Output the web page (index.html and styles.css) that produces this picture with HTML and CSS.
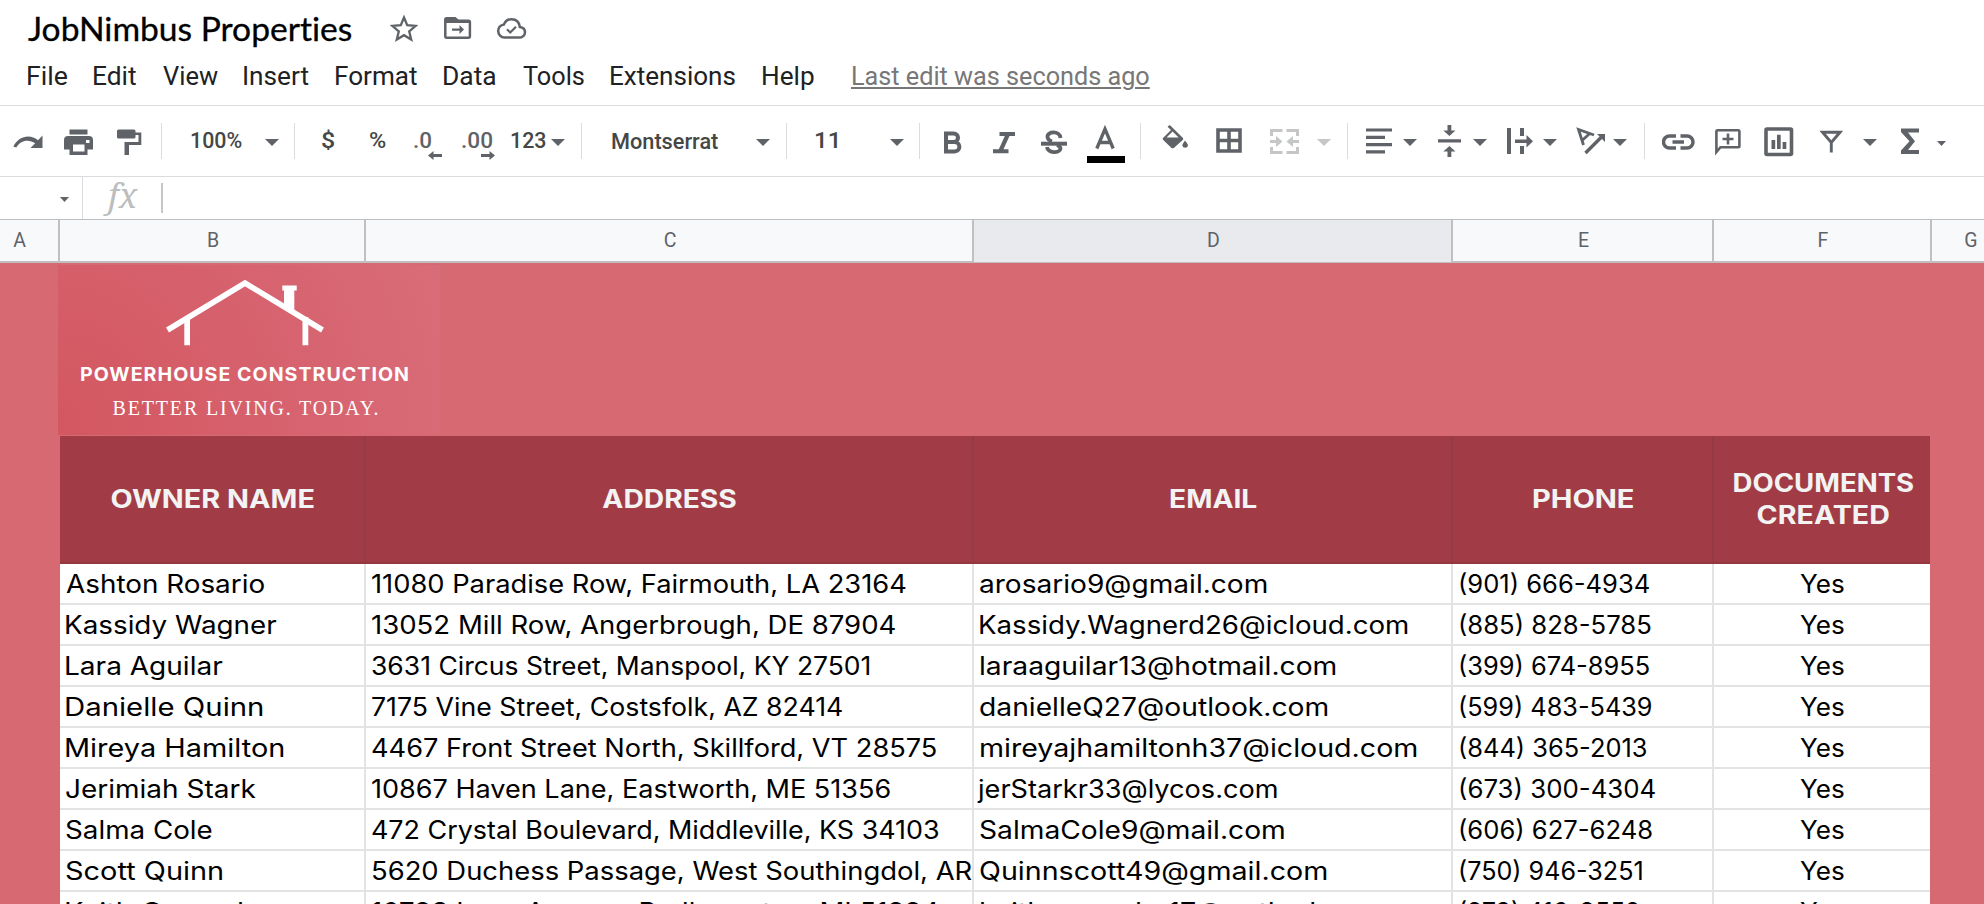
FILE: index.html
```html
<!DOCTYPE html>
<html lang="en">
<head>
<meta charset="utf-8">
<title>JobNimbus Properties</title>
<link rel="stylesheet" href="styles.css">
</head>
<body>
<header class="titlebar">
  <h1 class="title"><span class="fit" data-w="324">JobNimbus Properties</span></h1>
  <svg class="title-icons" width="150" height="50" viewBox="385 0 150 50">
    <path d="M404 17.500 L407.200 25.200 L415.600 25.900 L409.200 31.400 L411.200 39.500 L404 35.200 L396.800 39.500 L398.800 31.400 L392.400 25.900 L400.800 25.200 Z" class="line" stroke-width="2.300"/>
    <path d="M445.300 20.200 V36.300 Q445.300 37.700 446.700 37.700 H468.500 Q469.900 37.700 469.900 36.300 V22 Q469.900 20.700 468.500 20.700 H458 L455 18.300 H446.700 Q445.300 18.300 445.300 20.200 Z" class="line" stroke-width="2.500"/>
    <path d="M444.500 18 H455 L458.500 20 H470 V23 H444.500 Z" class="solid"/>
    <path d="M452 28.400 H459.500 V25 L464 29.500 L459.500 34 V30.700 H452 Z" class="solid"/>
    <path d="M504.500 37.600 H518.500 C523.200 37.600 525 34.500 525 32.200 C525 29 522.500 27.200 519.800 26.900 C519.200 21.500 515.500 19.200 511.500 19.200 C507.800 19.200 505.200 21.300 504 24.400 C500.500 24.900 498.200 27.600 498.200 31 C498.200 34.500 501 37.600 504.500 37.600 Z" class="line" stroke-width="2.500"/>
    <path d="M507 29.300 L510.200 32.500 L516 26.700" class="line" stroke-width="2.200"/>
  </svg>
</header>

<nav class="menubar">
  <a class="fit" data-w="39">File</a>
  <a class="fit" data-w="42">Edit</a>
  <a class="fit" data-w="54.500">View</a>
  <a class="fit" data-w="64.500">Insert</a>
  <a class="fit" data-w="81">Format</a>
  <a class="fit" data-w="51.500">Data</a>
  <a class="fit" data-w="61.500">Tools</a>
  <a class="fit" data-w="124.500">Extensions</a>
  <a class="fit" data-w="51">Help</a>
  <a class="fit last-edit" data-w="296">Last edit was seconds ago</a>
</nav>

<div class="toolbar">
  <svg width="31" height="70" viewBox="13 106 31 70"><path d="M42.500 135.500 V148 H30.500 L35.200 143.300 C28.500 138.500 20 140.500 16.300 147.600 L13.300 146.500 C18.500 136 30 133.500 38 140.200 Z" class="solid"/></svg>
  <svg width="31" height="70" viewBox="64 106 31 70"><path d="M69.500 129.500 H87.500 V134.500 H69.500 Z M68 136 H89 Q93 136 93 140 V149.500 H87.500 V155 H69.500 V149.500 H64 V140 Q64 136 68 136 Z M73 144.500 V151.500 H84.500 V144.500 Z M86 140 V143 H89.500 V140 Z" class="solid" fill-rule="evenodd"/></svg>
  <svg width="27" height="70" viewBox="117 106 27 70"><path d="M118.500 129.500 H134 Q135.500 129.500 135.500 131 V132.500 H141.300 V145 H129 V155 H124.500 V142 H138.500 V135 H135.500 V137 Q135.500 138.500 134 138.500 H118.500 Q117 138.500 117 137 V131 Q117 129.500 118.500 129.500 Z" class="solid"/></svg>
  <i class="sep"></i>
  <span class="fit tool-text" data-w="51">100%</span>
  <i class="arrow"></i>
  <i class="sep"></i>
  <span class="fit tool-text" data-w="12.500">$</span>
  <span class="fit tool-text" data-w="16">%</span>
  <svg width="30" height="70" viewBox="414 106 30 70"><text x="413" y="148" textLength="19" lengthAdjust="spacingAndGlyphs" class="decimals">.0</text><path d="M428 155.500 L433.500 151 V154 H442 V157 H433.500 V160 Z" class="solid"/></svg>
  <svg width="35" height="70" viewBox="462 106 35 70"><text x="461" y="148" textLength="32" lengthAdjust="spacingAndGlyphs" class="decimals">.00</text><path d="M495 155.500 L489.500 151 V154 H481 V157 H489.500 V160 Z" class="solid"/></svg>
  <span class="fit tool-text" data-w="35">123</span>
  <i class="arrow"></i>
  <i class="sep"></i>
  <span class="fit tool-text low" data-w="106">Montserrat</span>
  <i class="arrow"></i>
  <i class="sep"></i>
  <span class="fit tool-text" data-w="22.500">11</span>
  <i class="arrow"></i>
  <i class="sep"></i>
  <svg width="20" height="70" viewBox="944 106 20 70"><path d="M946 133.500 H953.500 C959.500 133.500 959.500 142 953.500 142 H946 Z M946 142 H954.500 C961 142 961 151.500 954.500 151.500 H946 Z" class="line" stroke-width="4"/></svg>
  <svg width="24" height="70" viewBox="993 106 24 70"><path d="M999.500 132 H1015 V136 H1009.500 L1003.500 149.300 H1008.500 V153.300 H993 V149.300 H998.800 L1004.800 136 H999.500 Z" class="solid"/></svg>
  <svg width="28" height="70" viewBox="1041 106 28 70"><path d="M1060.500 138 C1060 130.500 1047 131 1047.500 137 C1047.600 139 1049 140.500 1052 141.500 M1057 145 C1059.500 146 1060.500 147 1060.500 148.500 C1060 153.500 1047.500 153.500 1047 147" class="line" stroke-width="3.800"/><path d="M1041 141.700 H1067 V145.700 H1041 Z" class="solid"/></svg>
  <svg width="38" height="70" viewBox="1087 106 38 70"><path d="M1096.800 148.500 L1105 129 L1113.200 148.500 M1099.500 142.500 H1110.500" class="line" stroke-width="3.300"/><path d="M1087 156 H1125 V163 H1087 Z" fill="#000"/></svg>
  <i class="sep"></i>
  <svg width="28" height="70" viewBox="1162 106 28 70"><path d="M1169.800 125 L1183 138 Q1183.600 139 1183 139.700 L1173.800 148 Q1172.600 148.700 1171.500 148 L1163 139.700 Q1162.300 139 1163 138 L1171 130 L1167.500 126.800 Z M1172.500 131.500 L1166.500 137.600 H1178.700 Z M1185 140.500 Q1188 144 1188 145.700 A3 3 0 0 1 1182.300 145.700 Q1182.300 144 1185 140.500 Z" class="solid" fill-rule="evenodd"/></svg>
  <svg width="28" height="70" viewBox="1216 106 28 70"><path d="M1218 130 H1240 V151 H1218 Z M1229 130 V151 M1218 140.500 H1240" class="line" stroke-width="3.600"/></svg>
  <svg width="30" height="70" viewBox="1270 106 30 70"><path d="M1271.500 136 V130.500 H1282.500 M1286.500 130.500 H1297.500 V136 M1271.500 147 V152.500 H1282.500 M1286.500 152.500 H1297.500 V147 M1270 141.500 H1277 M1292 141.500 H1299" fill="none" stroke="#c4c6c8" stroke-width="3"/><path d="M1276 136 L1282.500 141.500 L1276 147 Z M1293 136 L1286.500 141.500 L1293 147 Z" fill="#c4c6c8"/></svg>
  <i class="arrow faded"></i>
  <i class="sep"></i>
  <svg width="26" height="70" viewBox="1366 106 26 70"><path d="M1366 130 H1392 M1366 137.300 H1385 M1366 144.600 H1392 M1366 151.900 H1385" class="line" stroke-width="3.200"/></svg>
  <i class="arrow"></i>
  <svg width="24" height="70" viewBox="1438 106 24 70"><path d="M1438 139.300 H1461 V142.500 H1438 Z M1447.500 125 H1451.300 V130.500 H1455.500 L1449.400 136 L1443.300 130.500 H1447.500 Z M1447.500 157 H1451.300 V151.500 H1455.500 L1449.400 146 L1443.300 151.500 H1447.500 Z" class="solid"/></svg>
  <i class="arrow"></i>
  <svg width="27" height="70" viewBox="1507 106 27 70"><path d="M1507 128 H1511 V154 H1507 Z M1520 128 H1524 V136 H1520 Z M1520 146 H1524 V154 H1520 Z M1515 139.500 H1526.500 V135 L1533 141.200 L1526.500 147.500 V143 H1515 Z" class="solid"/></svg>
  <i class="arrow"></i>
  <svg width="31" height="70" viewBox="1576 106 31 70"><path d="M1585.500 153 L1602 136.500" class="line" stroke-width="3.400"/><path d="M1597 134 H1605 V142 Z" class="solid"/><path d="M1583.500 145 L1578.500 129.500 L1594 135 M1589.500 133.800 L1581.500 141" class="line" stroke-width="2.800"/></svg>
  <i class="arrow"></i>
  <i class="sep"></i>
  <svg width="33" height="70" viewBox="1662 106 33 70"><path d="M1676 136 H1669.500 A6 6 0 0 0 1669.500 148 H1676 M1680.500 136 H1687 A6 6 0 0 1 1687 148 H1680.500 M1672.500 142 H1684" class="line" stroke-width="3.500"/></svg>
  <svg width="28" height="70" viewBox="1715 106 28 70"><path d="M1716.400 152 V131.500 Q1716.400 130.300 1717.600 130.300 H1738.200 Q1739.400 130.300 1739.400 131.500 V146 Q1739.400 147.200 1738.200 147.200 H1720.500 Z M1722.500 139 H1733.500 M1728 133.500 V144.500" class="line" stroke-width="2.600"/></svg>
  <svg width="30" height="70" viewBox="1764 106 30 70"><rect x="1766" y="129" width="25.500" height="25.500" rx="1" class="line" stroke-width="3.600"/><path d="M1771.500 140 H1775.200 V149 H1771.500 Z M1777 134.800 H1780.700 V149 H1777 Z M1782.600 142 H1786.300 V149 H1782.600 Z" class="solid"/></svg>
  <svg width="23" height="70" viewBox="1820 106 23 70"><path d="M1822.500 132.300 H1840 L1831.300 142.500 Z M1831.300 142 V152.500" class="line" stroke-width="2.900"/></svg>
  <i class="arrow"></i>
  <svg width="19" height="70" viewBox="1901 106 19 70"><path d="M1901 128.500 H1919 V132.500 H1908 L1915 141.200 L1908 150 H1919 V154 H1901 V150.500 L1909.500 141.200 L1901 132 Z" class="solid"/></svg>
  <i class="arrow small"></i>
</div>

<div class="formula">
  <i class="arrow small"></i>
  <i class="formula-sep"></i>
  <span class="fx">fx</span>
  <i class="caret"></i>
</div>

<div class="columns">
  <span class="col-a">A</span><span>B</span><span>C</span><span class="active">D</span><span>E</span><span>F</span><span class="col-g">G</span>
</div>

<main class="sheet">
  <svg class="logo" width="382" height="170" viewBox="58 265 382 170">
    <defs>
      <radialGradient id="warm" gradientUnits="userSpaceOnUse" cx="58" cy="420" r="440">
        <stop offset="0" stop-color="#d35760"/><stop offset=".5" stop-color="#d6626e"/><stop offset="1" stop-color="#d96e79"/>
      </radialGradient>
    </defs>
    <rect x="58" y="265" width="382" height="170" fill="url(#warm)"/>
    <path d="M167.500 330 L245 283 L322.500 330" fill="none" stroke="#fff" stroke-width="5.600"/>
    <path d="M184.300 317 H190 V345.300 H184.300 Z M302.500 317 H308.300 V345.300 H302.500 Z M282.300 285.500 H296.700 V290.500 H294.300 V313 L284 307 V290.500 H282.300 Z" fill="#fff"/>
    <text x="80" y="380.600" textLength="330" lengthAdjust="spacingAndGlyphs" class="logo-name">POWERHOUSE CONSTRUCTION</text>
    <text x="112.500" y="415" textLength="266" class="logo-tag">BETTER LIVING. TODAY.</text>
  </svg>

  <div class="table">
    <div class="row head">
      <b><span class="fit mid" data-w="202">OWNER NAME</span></b>
      <b><span class="fit mid" data-w="134">ADDRESS</span></b>
      <b><span class="fit mid" data-w="87">EMAIL</span></b>
      <b><span class="fit mid" data-w="100">PHONE</span></b>
      <b><span class="fit mid" data-w="180">DOCUMENTS</span><span class="fit mid" data-w="131">CREATED</span></b>
    </div>
    <div class="row"><p><span class="fit" data-w="198">Ashton Rosario</span></p><p><span class="fit" data-w="533.500">11080 Paradise Row, Fairmouth, LA 23164</span></p><p><span class="fit" data-w="286">arosario9@gmail.com</span></p><p><span class="fit" data-w="189">(901) 666-4934</span></p><p><span class="fit mid" data-w="43.500">Yes</span></p></div>
    <div class="row"><p><span class="fit" data-w="210">Kassidy Wagner</span></p><p><span class="fit" data-w="523">13052 Mill Row, Angerbrough, DE 87904</span></p><p><span class="fit" data-w="427">Kassidy.Wagnerd26@icloud.com</span></p><p><span class="fit" data-w="190.500">(885) 828-5785</span></p><p><span class="fit mid" data-w="43.500">Yes</span></p></div>
    <div class="row"><p><span class="fit" data-w="156">Lara Aguilar</span></p><p><span class="fit" data-w="497">3631 Circus Street, Manspool, KY 27501</span></p><p><span class="fit" data-w="355">laraaguilar13@hotmail.com</span></p><p><span class="fit" data-w="189">(399) 674-8955</span></p><p><span class="fit mid" data-w="43.500">Yes</span></p></div>
    <div class="row"><p><span class="fit" data-w="196">Danielle Quinn</span></p><p><span class="fit" data-w="470">7175 Vine Street, Costsfolk, AZ 82414</span></p><p><span class="fit" data-w="347">danielleQ27@outlook.com</span></p><p><span class="fit" data-w="191">(599) 483-5439</span></p><p><span class="fit mid" data-w="43.500">Yes</span></p></div>
    <div class="row"><p><span class="fit" data-w="217">Mireya Hamilton</span></p><p><span class="fit" data-w="564">4467 Front Street North, Skillford, VT 28575</span></p><p><span class="fit" data-w="436">mireyajhamiltonh37@icloud.com</span></p><p><span class="fit" data-w="186">(844) 365-2013</span></p><p><span class="fit mid" data-w="43.500">Yes</span></p></div>
    <div class="row"><p><span class="fit" data-w="190">Jerimiah Stark</span></p><p><span class="fit" data-w="517.500">10867 Haven Lane, Eastworth, ME 51356</span></p><p class="outdent"><span class="fit" data-w="299.500">jerStarkr33@lycos.com</span></p><p><span class="fit" data-w="195">(673) 300-4304</span></p><p><span class="fit mid" data-w="43.500">Yes</span></p></div>
    <div class="row"><p><span class="fit" data-w="146">Salma Cole</span></p><p><span class="fit" data-w="566">472 Crystal Boulevard, Middleville, KS 34103</span></p><p><span class="fit" data-w="303.500">SalmaCole9@mail.com</span></p><p><span class="fit" data-w="191.500">(606) 627-6248</span></p><p><span class="fit mid" data-w="43.500">Yes</span></p></div>
    <div class="row"><p><span class="fit" data-w="156">Scott Quinn</span></p><p><span class="fit" data-w="600">5620 Duchess Passage, West Southingdol, AR</span></p><p><span class="fit" data-w="346">Quinnscott49@gmail.com</span></p><p><span class="fit" data-w="181.500">(750) 946-3251</span></p><p><span class="fit mid" data-w="43.500">Yes</span></p></div>
    <div class="row"><p><span class="fit" data-w="204">Keith Camacho</span></p><p><span class="fit" data-w="566">10793 Lavo Avenue, Redlamorton, MI 51994</span></p><p><span class="fit" data-w="410">keithcamacho17@outlook.com</span></p><p><span class="fit" data-w="179">(973) 416-9552</span></p><p><span class="fit mid" data-w="43.500">Yes</span></p></div>
  </div>
</main>
<script src="fit.js"></script>
</body>
</html>
```
FILE: styles.css
```css
* { box-sizing: border-box; }
body {
  margin: 0;
  width: 1984px;
  height: 904px;
  overflow: hidden;
  background: #fff;
  font-family: Roboto, "Liberation Sans", sans-serif;
}
svg { display: block; flex: none; }
.line { fill: none; stroke: #5f6368; }
.solid { fill: #5f6368; }
.fit { display: block; width: max-content; white-space: pre; transform-origin: left center; }
.fit.mid { transform-origin: center; }

.titlebar { display: flex; height: 50px; padding-left: 28px; }
.title {
  margin: 0;
  width: 357px;
  font: 400 32px/57px Lato, "Open Sans", sans-serif;
  font-variant-ligatures: none;
  -webkit-text-stroke: .3px #000;
  color: #000;
}

.menubar {
  display: grid;
  grid-template-columns: 66px 69px 81px 92px 108px 79px 88px 152px 90px 300px;
  height: 56px;
  padding-left: 28px;
  border-bottom: 1px solid #dadce0;
  font-size: 26px;
  line-height: 52px;
  color: #202124;
}
.last-edit { color: #777; text-decoration: underline; text-decoration-thickness: 2px; text-underline-offset: 2px; }

.toolbar {
  display: grid;
  grid-template-columns:
    51px 53px 44px 30px 74px 29px 28px 48px 44px 48px 49px 40px
    30px 31px 144px 30px 29px 75px 29px 25px 49px 48px 46px 53px
    22px 54px 54px 47px 30px 19px 37px 35px 35px 34px 36px 33px
    37px 31px 18px 53px 49px 56px 43px 38px 36px 47px;
  align-items: center;
  height: 71px;
  padding-left: 13px;
  border-bottom: 1px solid #dadce0;
}
.sep { width: 1px; height: 36px; background: #dadce0; }
.tool-text { font-size: 22px; font-weight: 500; line-height: 70px; height: 70px; color: #444746; }
.tool-text.low { padding-top: 1px; }
.decimals { font: 500 22px Roboto, sans-serif; fill: #5f6368; }
.arrow {
  width: 14px;
  height: 7px;
  margin-top: 3px;
  background: #5f6368;
  clip-path: polygon(0 0, 100% 0, 50% 100%);
}
.arrow.faded { background: #c4c6c8; }
.arrow.small { width: 9px; height: 5px; margin-top: 5px; }

.formula { display: flex; align-items: center; height: 42px; padding-left: 60px; }
.formula .arrow { margin-top: 3px; }
.formula-sep { width: 1px; height: 42px; margin-left: 13px; background: #dadce0; }
.fx {
  width: 53px;
  margin-left: 25px;
  font: italic 34px/34px "Noto Serif", "Liberation Serif", serif;
  color: #bdbdbd;
  transform: translateY(-3px);
}
.caret { width: 2px; height: 30px; background: #c4c6c8; }

.columns {
  display: grid;
  grid-template-columns: 60px 306px 608px 479px 261px 218px 52px;
  height: 44px;
  border-top: 1px solid #bdbdbd;
  border-bottom: 2px solid #bdbfc1;
  background: #f8f9fb;
  font-size: 19.500px;
  line-height: 42px;
  text-align: center;
  color: #5f6368;
}
.columns span { padding-left: 2px; border-right: 2px solid #c0c0c0; }
.columns .col-a { padding: 0 19px 0 0; }
.columns .col-g { padding-left: 26px; border: 0; }
.columns .active { background: #e8eaed; }

.sheet { height: 641px; padding: 2px 54px 0 60px; background: #d76973; overflow: hidden; }
.logo { margin: 0 0 1px -2px; }
.logo-name { font: 700 19px Inter, sans-serif; letter-spacing: 1px; fill: #fff; }
.logo-tag { font: 400 20px "Liberation Serif", serif; fill: #fff; }

.table { width: 1870px; font-family: Inter, "Open Sans", sans-serif; font-size: 25px; color: #000; }
.row {
  display: grid;
  grid-template-columns: 306px 608px 479px 261px 216px;
  height: 41px;
  background: #fff;
  border-bottom: 2px solid #e2e3e3;
}
.row p { margin: 0; padding-left: 6px; line-height: 41px; overflow: hidden; border-right: 2px solid #e2e3e3; }
.row p:nth-child(4) { padding-left: 7px; }
.row p.outdent { padding-left: 3px; }
.row p:last-child { display: flex; justify-content: center; padding: 0 0 0 1px; border: 0; }
.row.head { height: 128px; background: #a13c46; border-bottom-color: #93383f; color: #f3f3f3; }
.head b {
  display: flex;
  flex-direction: column;
  align-items: center;
  justify-content: center;
  padding-left: 2px;
  line-height: 32px;
  border-right: 2px solid #933c45;
}
.head b:last-child { border: 0; }
```
FILE: fit.js
```js
// Stretches each label so that its inked width equals its data-w value.
const ctx = document.createElement('canvas').getContext('2d');
document.querySelectorAll('.fit').forEach(el => {
  const cs = getComputedStyle(el);
  ctx.font = `${cs.fontWeight} ${cs.fontSize} ${cs.fontFamily}`;
  const m = ctx.measureText(el.textContent);
  const scale = el.dataset.w / (m.actualBoundingBoxLeft + m.actualBoundingBoxRight);
  el.style.transform = `scaleX(${scale})`;
  if (!el.classList.contains('mid')) el.style.marginLeft = `${m.actualBoundingBoxLeft * scale}px`;
});
```
